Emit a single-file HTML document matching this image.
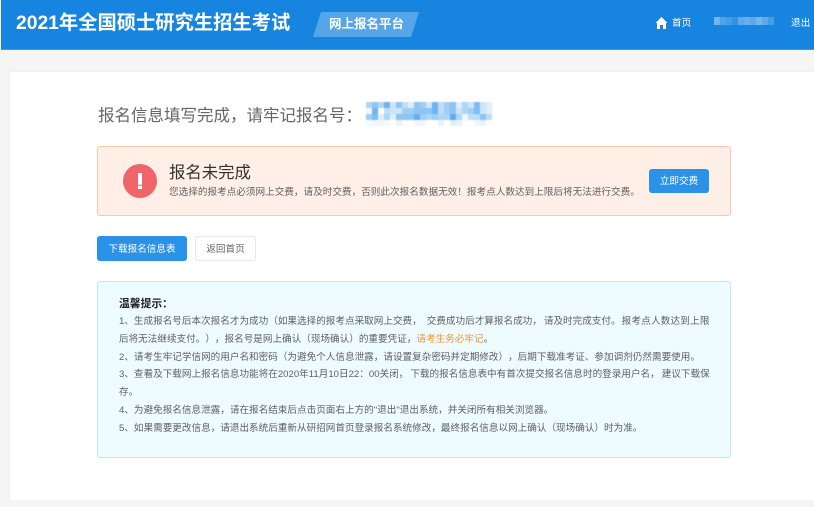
<!DOCTYPE html>
<html lang="zh-CN">
<head>
<meta charset="utf-8">
<title>网上报名平台</title>
<style>
html,body{margin:0;padding:0;width:814px;height:507px;overflow:hidden;background:#f5f5f5;}
body{position:relative;font-family:"Liberation Sans","Noto Sans CJK SC",sans-serif;text-spacing-trim:space-all;}
div,a,span.a{position:absolute;white-space:nowrap;box-sizing:border-box;}
#hdr{left:1px;top:0;width:813px;height:50px;background:#1785e0;border-bottom:1px solid #3c9ae6;}
#leftstrip{left:0;top:0;width:1px;height:50px;background:#f8fbfe;}
#title{left:16px;top:10px;font-size:19.3px;line-height:28px;font-weight:bold;color:#fff;}
#tag{left:329px;top:15px;font-size:12.5px;line-height:19px;font-weight:bold;color:#fff;}
.nav{font-size:9.6px;line-height:14px;color:#fff;top:17px;}
#card{left:9px;top:71px;width:805px;height:429px;background:#fff;border-left:1px solid #efefef;border-top:1px solid #f0f0f0;}
#h1{left:98px;top:104px;font-size:16.5px;line-height:24px;color:#666;}
#alert{left:97px;top:146px;width:634px;height:70px;background:#ffefe7;border:1px solid #fec4ad;border-radius:3px;}
#a-t{left:169px;top:162px;font-size:16.4px;line-height:22px;color:#333;}
#a-d{left:169px;top:186px;font-size:9.62px;line-height:14px;color:#606060;}
.btn{border-radius:3px;text-align:center;font-size:9.6px;}
#pay{left:649px;top:169px;width:60px;height:24px;line-height:26px;background:#2a92e8;color:#fff;}
#dl{left:97px;top:236px;width:90px;height:25px;line-height:27px;background:#2a92e8;color:#fff;}
#back{left:195px;top:236px;width:61px;height:25px;line-height:25px;background:#fff;color:#666;border:1px solid #e6e8ec;}
#tip{left:97px;top:281px;width:634px;height:177px;background:#eefbff;border:1px solid #bfe8fb;border-radius:3px;}
.l{left:119px;font-size:9.6px;line-height:14px;color:#606060;}
.o{color:#f7952c;}
#tt{left:119px;top:297px;font-size:10.8px;line-height:14px;font-weight:bold;color:#222;}
svg{position:absolute;display:block;}
</style>
</head>
<body>
<div id="leftstrip"></div>
<div id="hdr"></div>
<div id="title">2021年全国硕士研究生招生考试</div>
<svg style="left:313px;top:12px" width="106" height="25"><polygon points="8,0 106,0 98,25 0,25" fill="#fff" fill-opacity=".27"/></svg>
<div id="tag">网上报名平台</div>
<svg style="left:655px;top:16px" width="13" height="14" viewBox="0 0 13 14"><path d="M6.5 1 L12.5 7 L11 7 L11 13 L8 13 L8 9 L5 9 L5 13 L2 13 L2 7 L0.5 7 Z" fill="#fff"/></svg>
<div class="nav" style="left:672px">首页</div>
<svg style="left:714px;top:17px" width="60" height="9"><g fill="#fff"><rect x="0" width="6" height="8" fill-opacity=".4"/><rect x="6" width="6" height="8" fill-opacity=".25"/><rect x="12" width="6" height="8" fill-opacity=".2"/><rect x="18" width="6" height="8" fill-opacity=".12"/><rect x="24" width="6" height="8" fill-opacity=".3"/><rect x="30" width="6" height="8" fill-opacity=".35"/><rect x="36" width="6" height="8" fill-opacity=".3"/><rect x="42" width="6" height="8" fill-opacity=".4"/><rect x="48" width="6" height="8" fill-opacity=".3"/><rect x="54" width="6" height="8" fill-opacity=".2"/></g></svg>
<div class="nav" style="left:791px">退出</div>

<div id="card"></div>
<div id="h1">报名信息填写完成，请牢记报名号：</div>
<svg style="left:366px;top:102px;filter:blur(.4px);opacity:.9" width="126" height="24"><g fill="#4ba3ec">
<rect x="0" y="0" width="6" height="6" fill-opacity=".5"/><rect x="6" y="0" width="6" height="6" fill-opacity=".7"/><rect x="12" y="0" width="6" height="6" fill-opacity=".5"/><rect x="18" y="0" width="6" height="6" fill-opacity=".9"/><rect x="24" y="0" width="6" height="6" fill-opacity=".3"/><rect x="30" y="0" width="6" height="6" fill-opacity=".7"/><rect x="36" y="0" width="6" height="6" fill-opacity=".4"/><rect x="42" y="0" width="6" height="6" fill-opacity=".2"/><rect x="48" y="0" width="6" height="6" fill-opacity=".7"/><rect x="54" y="0" width="6" height="6" fill-opacity=".6"/><rect x="60" y="0" width="6" height="6" fill-opacity=".3"/><rect x="66" y="0" width="6" height="6" fill-opacity=".9"/><rect x="72" y="0" width="6" height="6" fill-opacity=".4"/><rect x="78" y="0" width="6" height="6" fill-opacity=".6"/><rect x="84" y="0" width="6" height="6" fill-opacity=".7"/><rect x="90" y="0" width="6" height="6" fill-opacity=".2"/><rect x="96" y="0" width="6" height="6" fill-opacity=".5"/><rect x="102" y="0" width="6" height="6" fill-opacity=".3"/><rect x="108" y="0" width="6" height="6" fill-opacity=".8"/><rect x="114" y="0" width="6" height="6" fill-opacity=".3"/><rect x="120" y="0" width="6" height="6" fill-opacity=".2"/>
<rect x="0" y="6" width="6" height="6" fill-opacity=".1"/><rect x="6" y="6" width="6" height="6" fill-opacity=".9"/><rect x="18" y="6" width="6" height="6" fill-opacity=".4"/><rect x="24" y="6" width="6" height="6" fill-opacity=".3"/><rect x="30" y="6" width="6" height="6" fill-opacity=".3"/><rect x="36" y="6" width="6" height="6" fill-opacity=".6"/><rect x="42" y="6" width="6" height="6" fill-opacity=".6"/><rect x="48" y="6" width="6" height="6" fill-opacity=".7"/><rect x="54" y="6" width="6" height="6" fill-opacity=".7"/><rect x="60" y="6" width="6" height="6" fill-opacity=".7"/><rect x="66" y="6" width="6" height="6" fill-opacity=".9"/><rect x="72" y="6" width="6" height="6" fill-opacity=".4"/><rect x="78" y="6" width="6" height="6" fill-opacity=".6"/><rect x="84" y="6" width="6" height="6" fill-opacity=".7"/><rect x="90" y="6" width="6" height="6" fill-opacity=".3"/><rect x="96" y="6" width="6" height="6" fill-opacity=".5"/><rect x="102" y="6" width="6" height="6" fill-opacity=".6"/><rect x="108" y="6" width="6" height="6" fill-opacity=".8"/><rect x="114" y="6" width="6" height="6" fill-opacity=".3"/><rect x="120" y="6" width="6" height="6" fill-opacity=".2"/>
<rect x="0" y="12" width="6" height="6" fill-opacity=".6"/><rect x="6" y="12" width="6" height="6" fill-opacity=".8"/><rect x="12" y="12" width="6" height="6" fill-opacity=".2"/><rect x="18" y="12" width="6" height="6" fill-opacity=".5"/><rect x="24" y="12" width="6" height="6" fill-opacity=".2"/><rect x="30" y="12" width="6" height="6" fill-opacity=".7"/><rect x="36" y="12" width="6" height="6" fill-opacity=".7"/><rect x="42" y="12" width="6" height="6" fill-opacity=".7"/><rect x="48" y="12" width="6" height="6" fill-opacity=".95"/><rect x="54" y="12" width="6" height="6" fill-opacity=".6"/><rect x="60" y="12" width="6" height="6" fill-opacity=".5"/><rect x="66" y="12" width="6" height="6" fill-opacity=".6"/><rect x="72" y="12" width="6" height="6" fill-opacity=".5"/><rect x="78" y="12" width="6" height="6" fill-opacity=".5"/><rect x="84" y="12" width="6" height="6" fill-opacity="1"/><rect x="90" y="12" width="6" height="6" fill-opacity=".5"/><rect x="96" y="12" width="6" height="6" fill-opacity=".1"/><rect x="102" y="12" width="6" height="6" fill-opacity=".4"/><rect x="108" y="12" width="6" height="6" fill-opacity=".4"/><rect x="114" y="12" width="6" height="6" fill-opacity=".7"/><rect x="120" y="12" width="6" height="6" fill-opacity=".4"/>
<rect x="0" y="18" width="6" height="6" fill-opacity=".06"/><rect x="6" y="18" width="6" height="6" fill-opacity=".1"/><rect x="12" y="18" width="6" height="6" fill-opacity=".1"/><rect x="18" y="18" width="6" height="6" fill-opacity=".05"/><rect x="30" y="18" width="6" height="6" fill-opacity=".15"/><rect x="48" y="18" width="6" height="6" fill-opacity=".1"/><rect x="54" y="18" width="6" height="6" fill-opacity=".1"/><rect x="72" y="18" width="6" height="6" fill-opacity=".15"/><rect x="84" y="18" width="6" height="6" fill-opacity=".2"/><rect x="90" y="18" width="6" height="6" fill-opacity=".15"/><rect x="108" y="18" width="6" height="6" fill-opacity=".1"/><rect x="114" y="18" width="6" height="6" fill-opacity=".15"/>
</g></svg>

<div id="alert"></div>
<svg style="left:122px;top:163px" width="36" height="36" viewBox="0 0 36 36"><circle cx="18" cy="18" r="17" fill="#f16468"/><rect x="16" y="10" width="4" height="11.7" rx=".6" fill="#fff"/><rect x="16" y="22.7" width="4" height="3.4" fill="#fff"/></svg>
<div id="a-t">报名未完成</div>
<div id="a-d">您选择的报考点必须网上交费，请及时交费，否则此次报名数据无效！报考点人数达到上限后将无法进行交费。</div>
<div id="pay" class="btn">立即交费</div>
<div id="dl" class="btn">下载报名信息表</div>
<div id="back" class="btn">返回首页</div>

<div id="tip"></div>
<div id="tt">温馨提示：</div>
<div class="l" style="top:315px">1、生成报名号后本次报名才为成功（如果选择的报考点采取网上交费，<span style="margin-left:5px">交费成功后才算报名成功，</span><span style="margin-left:2px">请及时完成支付。</span><span style="margin-left:1px;letter-spacing:.18px">报考点人数达到上限</span></div>
<div class="l" style="top:333px">后将无法继续支付。），报名号是网上确认（现场确认）的重要凭证，<span class="o">请考生务必牢记</span>。</div>
<div class="l" style="top:351px">2、请考生牢记学信网的用户名和密码（为避免个人信息泄露，请设置复杂密码并定期修改），后期下载准考证、参加调剂仍然需要使用。</div>
<div class="l" style="top:368px">3、查看及下载网上报名信息功能将在2020年11月10日22：00关闭，<span style="margin-left:2px">下载的报名信息表中有首次提交报名信息时的登录用户名，</span><span style="margin-left:2px">建议下载保</span></div>
<div class="l" style="top:386px">存。</div>
<div class="l" style="top:404px">4、为避免报名信息泄露，请在报名结束后点击页面右上方的"退出"退出系统，并关闭所有相关浏览器。</div>
<div class="l" style="top:422px">5、如果需要更改信息，请退出系统后重新从研招网首页登录报名系统修改，最终报名信息以网上确认（现场确认）时为准。</div>
</body>
</html>
